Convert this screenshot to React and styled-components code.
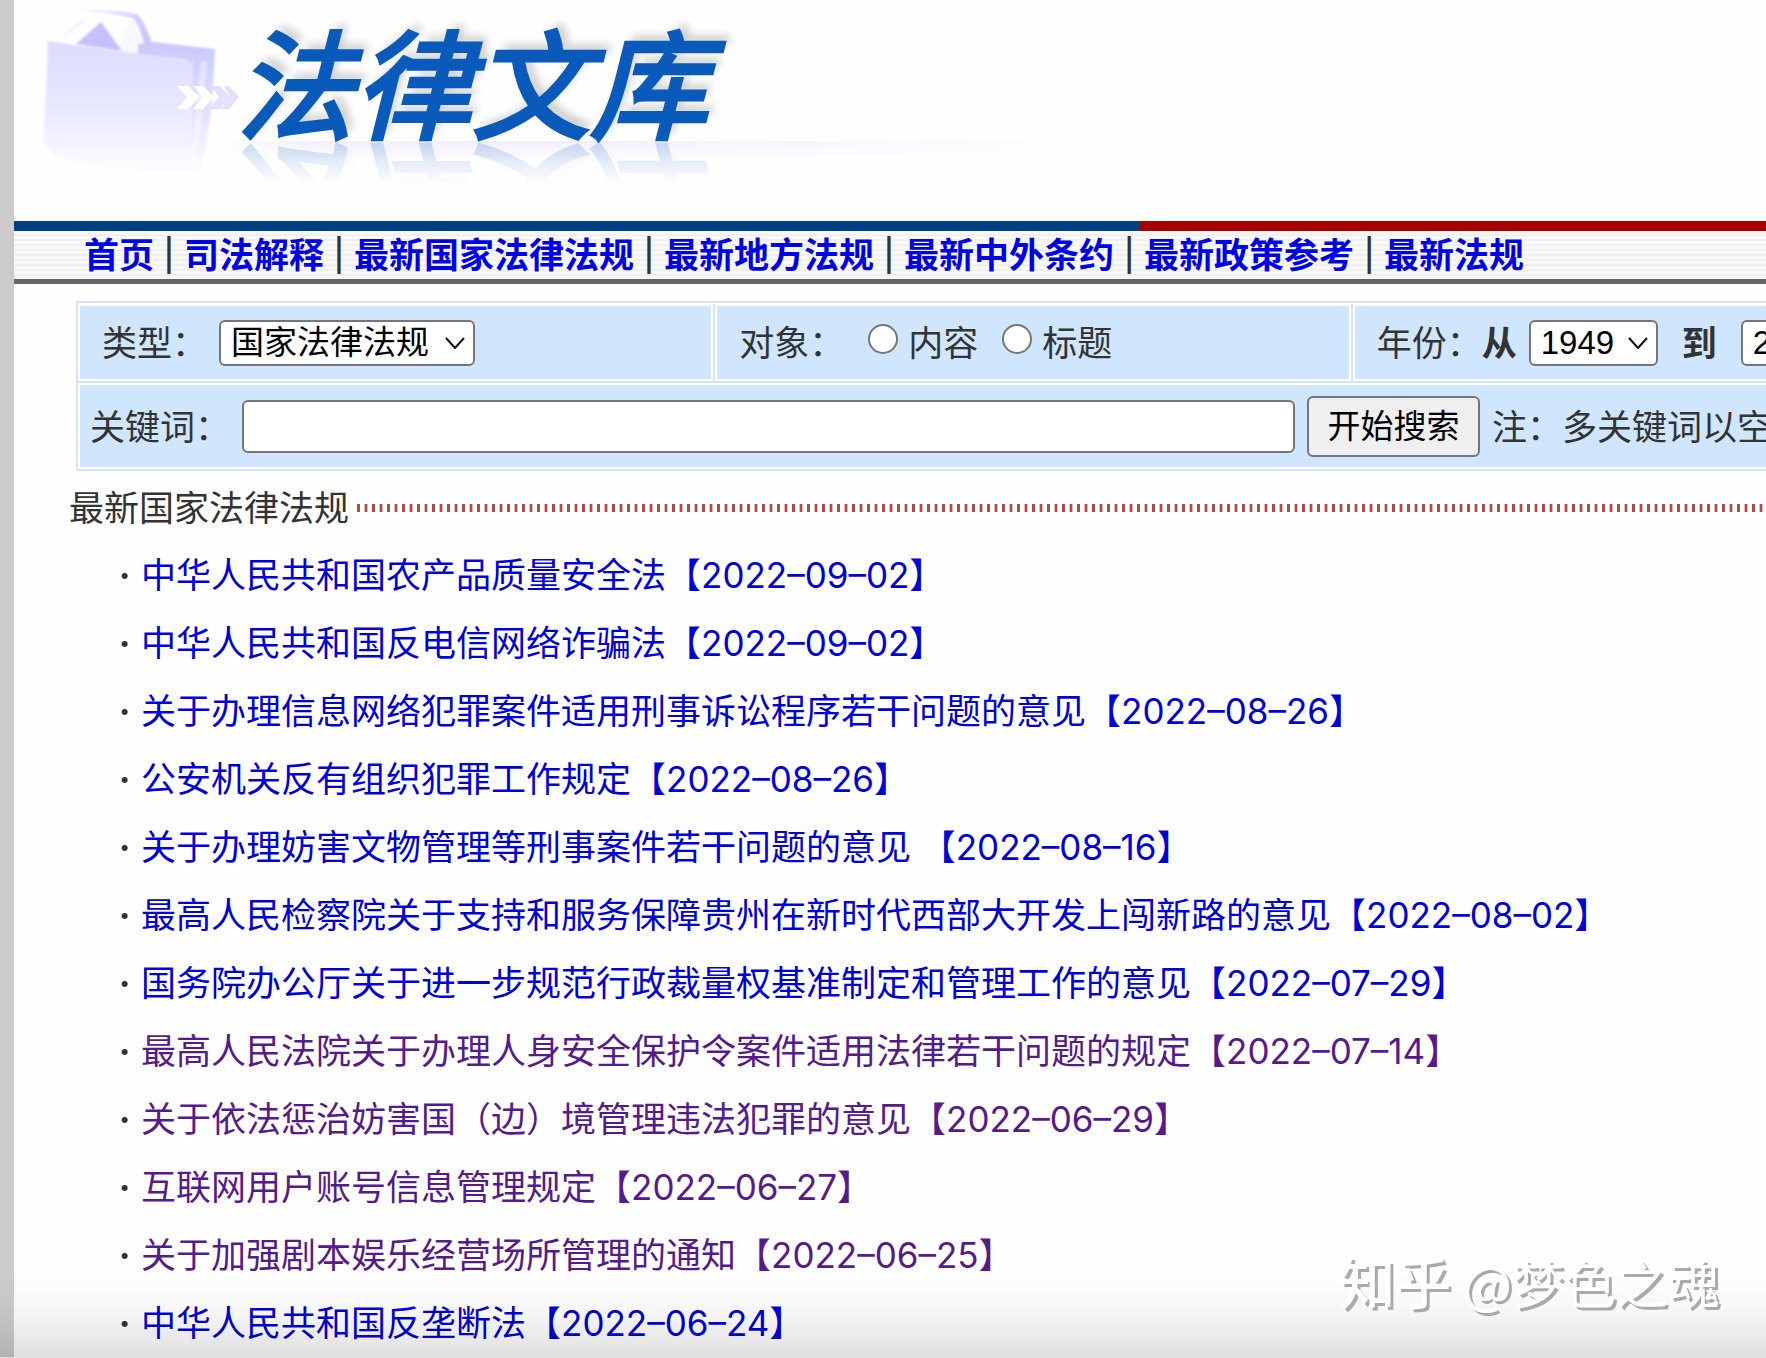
import React from 'react';
import styled, { createGlobalStyle } from 'styled-components';

const NAV = ['首页', '司法解释', '最新国家法律法规', '最新地方法规', '最新中外条约', '最新政策参考', '最新法规'];

const LAWS = [
  { title: '中华人民共和国农产品质量安全法', date: '2022-09-02' },
  { title: '中华人民共和国反电信网络诈骗法', date: '2022-09-02' },
  { title: '关于办理信息网络犯罪案件适用刑事诉讼程序若干问题的意见', date: '2022-08-26' },
  { title: '公安机关反有组织犯罪工作规定', date: '2022-08-26' },
  { title: '关于办理妨害文物管理等刑事案件若干问题的意见 ', date: '2022-08-16' },
  { title: '最高人民检察院关于支持和服务保障贵州在新时代西部大开发上闯新路的意见', date: '2022-08-02' },
  { title: '国务院办公厅关于进一步规范行政裁量权基准制定和管理工作的意见', date: '2022-07-29' },
  { title: '最高人民法院关于办理人身安全保护令案件适用法律若干问题的规定', date: '2022-07-14', visited: true },
  { title: '关于依法惩治妨害国（边）境管理违法犯罪的意见', date: '2022-06-29', visited: true },
  { title: '互联网用户账号信息管理规定', date: '2022-06-27', visited: true },
  { title: '关于加强剧本娱乐经营场所管理的通知', date: '2022-06-25', visited: true },
  { title: '中华人民共和国反垄断法', date: '2022-06-24' },
];

const FolderIcon = () => (
  <svg width="198" height="180" viewBox="0 0 198 180" aria-hidden="true">
    <defs>
      <linearGradient id="front" x1="0" y1="0" x2="0" y2="1">
        <stop offset="0" stopColor="#dcdcff" />
        <stop offset="0.5" stopColor="#e8e8ff" />
        <stop offset="1" stopColor="#fefefe" />
      </linearGradient>
      <linearGradient id="side" x1="0" y1="0" x2="0" y2="1">
        <stop offset="0" stopColor="#cac8fb" />
        <stop offset="0.5" stopColor="#e0dfff" />
        <stop offset="1" stopColor="#fefefe" />
      </linearGradient>
      <linearGradient id="edge" x1="0" y1="0" x2="1" y2="0">
        <stop offset="0" stopColor="#fefefe" />
        <stop offset="0.6" stopColor="#dedcff" />
        <stop offset="1" stopColor="#c6c4fa" />
      </linearGradient>
      <filter id="soft" x="-5%" y="-5%" width="110%" height="110%">
        <feGaussianBlur stdDeviation="0.8" />
      </filter>
    </defs>
    <g filter="url(#soft)">
      <path d="M28 10Q68 9 94 14Q101 17 110 43L102 44Q97 24 91 18Q66 12 28 10Z" fill="url(#edge)" />
      <path d="M22 34Q32 24 44 19L40 24Q30 30 23 36Z" fill="#f1f0ff" />
      <path d="M76 50 88 20 92 20 101 48 92 56Z" fill="#f7f7ff" />
      <path d="M34 44 59 22 80 51Z" fill="#c4c2fa" />
      <path d="M96 44 112 42 173 49 171 88Q168 130 158 174L140 176 145 60 96 54Z" fill="url(#side)" />
      <path d="M159 62 165 60 160 120 152 170 148 170Z" fill="#ffffff" opacity="0.4" />
      <path d="M6 41 151 62 149 176Q60 170 16 156Q2 150 2 136Z" fill="url(#front)" />
    </g>
    <g fill="#ffffff">
      <path d="M135 86h11l12 11-12 12h-11l10-12z" />
      <path d="M151 86h10l11 11-11 12h-10l9-12z" />
    </g>
    <g fill="#e2e0ff">
      <path d="M169 86h9l10 11-10 12h-11l10-12z" />
      <path d="M182 86h5l10 11-10 12h-8l9-12z" />
    </g>
  </svg>
);

const Select = ({ id, label, options, wide }) => (
  <SelectWrapper wide={wide ? 1 : 0}>
    <SelectBox id={id} aria-label={label}>
      {options.map(option => (
        <option key={option}>{option}</option>
      ))}
    </SelectBox>
    <Arrow viewBox="0 0 20 12" aria-hidden="true">
      <path d="M1 1 10 11 19 1" fill="none" stroke="#111" strokeWidth="2" />
    </Arrow>
  </SelectWrapper>
);

const App = () => {
  return (
    <>
      <GlobalStyle />
      <Page>
        <Header>
          <FolderIcon />
          <LogoText>法律文库</LogoText>
        </Header>
        <ColorBar />
        <Nav>
          {NAV.map((name, i) => (
            <React.Fragment key={name}>
              {i > 0 && <Divider>|</Divider>}
              <NavLink href="#">{name}</NavLink>
            </React.Fragment>
          ))}
        </Nav>
        <SearchForm onSubmit={e => e.preventDefault()}>
          <FilterRow>
            <Cell indent="22px">
              <Label htmlFor="kind">类型：</Label>
              <Gap size="12px" />
              <Select id="kind" label="类型" wide options={['国家法律法规', '司法解释', '地方法规']} />
            </Cell>
            <Cell indent="22px">
              <Text>对象：</Text>
              <Gap size="24px" />
              <RadioLabel>
                <Radio type="radio" name="target" />
                <Text>内容</Text>
              </RadioLabel>
              <Gap size="24px" />
              <RadioLabel>
                <Radio type="radio" name="target" />
                <Text>标题</Text>
              </RadioLabel>
            </Cell>
            <Cell indent="22px">
              <Text>年份：</Text>
              <Strong htmlFor="from">从</Strong>
              <Gap size="12px" />
              <Select id="from" label="从" options={['1949', '1950', '2022']} />
              <Gap size="24px" />
              <Strong htmlFor="to">到</Strong>
              <Gap size="24px" />
              <Select id="to" label="到" options={['2022', '2021', '1949']} />
            </Cell>
          </FilterRow>
          <KeywordRow>
            <Cell indent="10px">
              <Label htmlFor="keyword">关键词：</Label>
              <Gap size="12px" />
              <KeywordInput id="keyword" type="text" />
              <Gap size="12px" />
              <SearchButton type="submit">开始搜索</SearchButton>
              <Gap size="12px" />
              <Text>注：多关键词以空格隔开</Text>
            </Cell>
          </KeywordRow>
        </SearchForm>
        <SectionHead>
          <SectionTitle>最新国家法律法规</SectionTitle>
          <Ticks />
        </SectionHead>
        <LawList>
          {LAWS.map(law => (
            <LawItem key={law.title}>
              <Bullet>·</Bullet>
              <LawLink href="#" visited={law.visited ? 1 : 0}>
                {law.title}【<LawDate>{law.date.replace(/-/g, '–')}</LawDate>】
              </LawLink>
            </LawItem>
          ))}
        </LawList>
      </Page>
      <BottomShade />
      <Watermark>
        <Brand>知乎</Brand> @梦色之魂
      </Watermark>
    </>
  );
};

const GlobalStyle = createGlobalStyle`
  * {
    box-sizing: border-box;
  }
  html {
    overflow: hidden;
  }
  body {
    margin: 0;
    overflow: hidden;
    background: #fefefe;
    color: #333;
    font-family: 'Liberation Sans', 'Noto Sans CJK SC', sans-serif;
    font-size: 35px;
  }
`;

const Page = styled.div`
  min-width: 1990px;
  border-left: 14px solid #ccc;
  white-space: nowrap;
`;

const Header = styled.header`
  display: flex;
  align-items: flex-start;
  height: 221px;
  padding-left: 28px;
  background-image: linear-gradient(rgba(254, 254, 254, 0), #fefefe),
    linear-gradient(90deg, #fefefe, #f1efff 100px, #f1efff 350px, #fefefe);
  background-position: 200px 141px;
  background-size: 900px 20px;
  background-repeat: no-repeat;
`;

const LogoText = styled.h1`
  margin: 0 0 0 -4px;
  padding-top: 16px;
  height: 142px;
  line-height: 126px;
  font-family: 'Noto Sans CJK SC', sans-serif;
  font-size: 118px;
  font-weight: 400;
  font-style: italic;
  color: #0a5abb;
  -webkit-text-stroke: 4px #0a5abb;
  text-shadow: 7px -7px 8px rgba(0, 0, 0, 0.2);
  -webkit-box-reflect: below 0 linear-gradient(transparent 70%, rgba(0, 0, 0, 0.2));
`;

const ColorBar = styled.div`
  height: 10px;
  background: linear-gradient(90deg, #003f80 1125px, #a80000 1125px);
`;

const Nav = styled.nav`
  display: flex;
  align-items: center;
  height: 53px;
  padding: 0 0 6px 70px;
  border-bottom: 5px solid #666;
  background: repeating-linear-gradient(#f9f9f9 0 3px, #f0f0f0 3px 5px);
`;

const NavLink = styled.a`
  color: #0000e6;
  font-weight: 700;
  text-decoration: none;
`;

const Divider = styled.span`
  width: 30px;
  font-size: 40px;
  line-height: 40px;
  text-align: center;
`;

const SearchForm = styled.form`
  margin: 17px 0 0 62px;
  padding: 1px 0 0;
  border: 2px solid #d2e6f8;
`;

const FilterRow = styled.div`
  display: grid;
  grid-template-columns: repeat(3, 1fr);
  gap: 2px;
  background: #d2e6f8;
  border-bottom: 2px solid #d2e6f8;
`;

const KeywordRow = styled.div`
  display: grid;
`;

const Cell = styled.div`
  display: flex;
  align-items: center;
  height: 77px;
  padding-left: ${props => props.indent};
  border: 2px solid #fff;
  background: #cfe6fe;
  ${KeywordRow} & {
    height: 86px;
  }
`;

const Gap = styled.span`
  flex: none;
  width: ${props => props.size};
`;

const Text = styled.span`
  padding-bottom: 4px;
`;

const Label = styled.label`
  padding-bottom: 4px;
`;

const Strong = styled(Label)`
  font-weight: 700;
`;

const SelectWrapper = styled.div`
  position: relative;
  width: ${props => (props.wide ? '256px' : '129px')};
  height: 46px;
`;

const SelectBox = styled.select`
  appearance: none;
  width: 100%;
  height: 100%;
  padding: 0 0 0 10px;
  border: 2px solid #767676;
  border-radius: 6px;
  background: #fff;
  color: #000;
  font-family: inherit;
  font-size: 33px;
`;

const Arrow = styled.svg`
  position: absolute;
  top: 17px;
  right: 10px;
  width: 20px;
  height: 12px;
  pointer-events: none;
`;

const RadioLabel = styled.label`
  display: flex;
  align-items: center;
  gap: 10px;
`;

const Radio = styled.input`
  appearance: none;
  width: 30px;
  height: 30px;
  margin: 0 0 8px;
  border: 2px solid #767676;
  border-radius: 50%;
  background: #fff;
  &:checked {
    border: 8px solid #0075ff;
  }
`;

const KeywordInput = styled.input`
  width: 1053px;
  height: 53px;
  padding: 0 12px;
  border: 2px solid #767676;
  border-radius: 6px;
  background: #fff;
  font-family: inherit;
  font-size: 33px;
`;

const SearchButton = styled.button`
  width: 173px;
  height: 61px;
  padding: 0 0 4px;
  border: 2px solid #767676;
  border-radius: 6px;
  background: #efefef;
  color: #000;
  font-family: inherit;
  font-size: 33px;
`;

const SectionHead = styled.div`
  display: flex;
  align-items: center;
  gap: 8px;
  height: 70px;
  padding: 4px 0 0 55px;
`;

const SectionTitle = styled.h2`
  margin: 0;
  padding-bottom: 6px;
  font-size: 35px;
  font-weight: 400;
`;

const Ticks = styled.div`
  flex: 1;
  height: 8px;
  background: repeating-linear-gradient(
    90deg,
    #b5474c 0 3px,
    transparent 3px 7px,
    #e3b9bb 7px 8px,
    #b5474c 8px 10px,
    #e3b9bb 10px 11px,
    transparent 11px 15px
  );
`;

const LawList = styled.ul`
  margin: 0;
  padding: 0 0 0 94px;
  list-style: none;
`;

const LawItem = styled.li`
  display: flex;
  height: 68px;
  line-height: 68px;
`;

const Bullet = styled.span`
  width: 33px;
  font-family: Inter, sans-serif;
  font-weight: 700;
  text-align: center;
`;

const LawLink = styled.a`
  color: ${props => (props.visited ? '#551a8b' : '#0000d8')};
  text-decoration: none;
  white-space: pre;
`;

const LawDate = styled.span`
  font-family: Inter, sans-serif;
`;

const BottomShade = styled.div`
  position: fixed;
  left: 0;
  right: 0;
  bottom: 0;
  height: 84px;
  background: linear-gradient(transparent, rgba(0, 0, 0, 0.03) 45%, rgba(0, 0, 0, 0.12));
  pointer-events: none;
`;

const Watermark = styled.div`
  position: fixed;
  right: 46px;
  bottom: 36px;
  color: #fff;
  font-family: 'Noto Sans CJK SC', sans-serif;
  font-size: 52px;
  line-height: 80px;
  text-shadow: 3px 3px 0 #aaa;
`;

const Brand = styled.span`
  font-size: 56px;
  font-weight: 500;
`;

export default App;
